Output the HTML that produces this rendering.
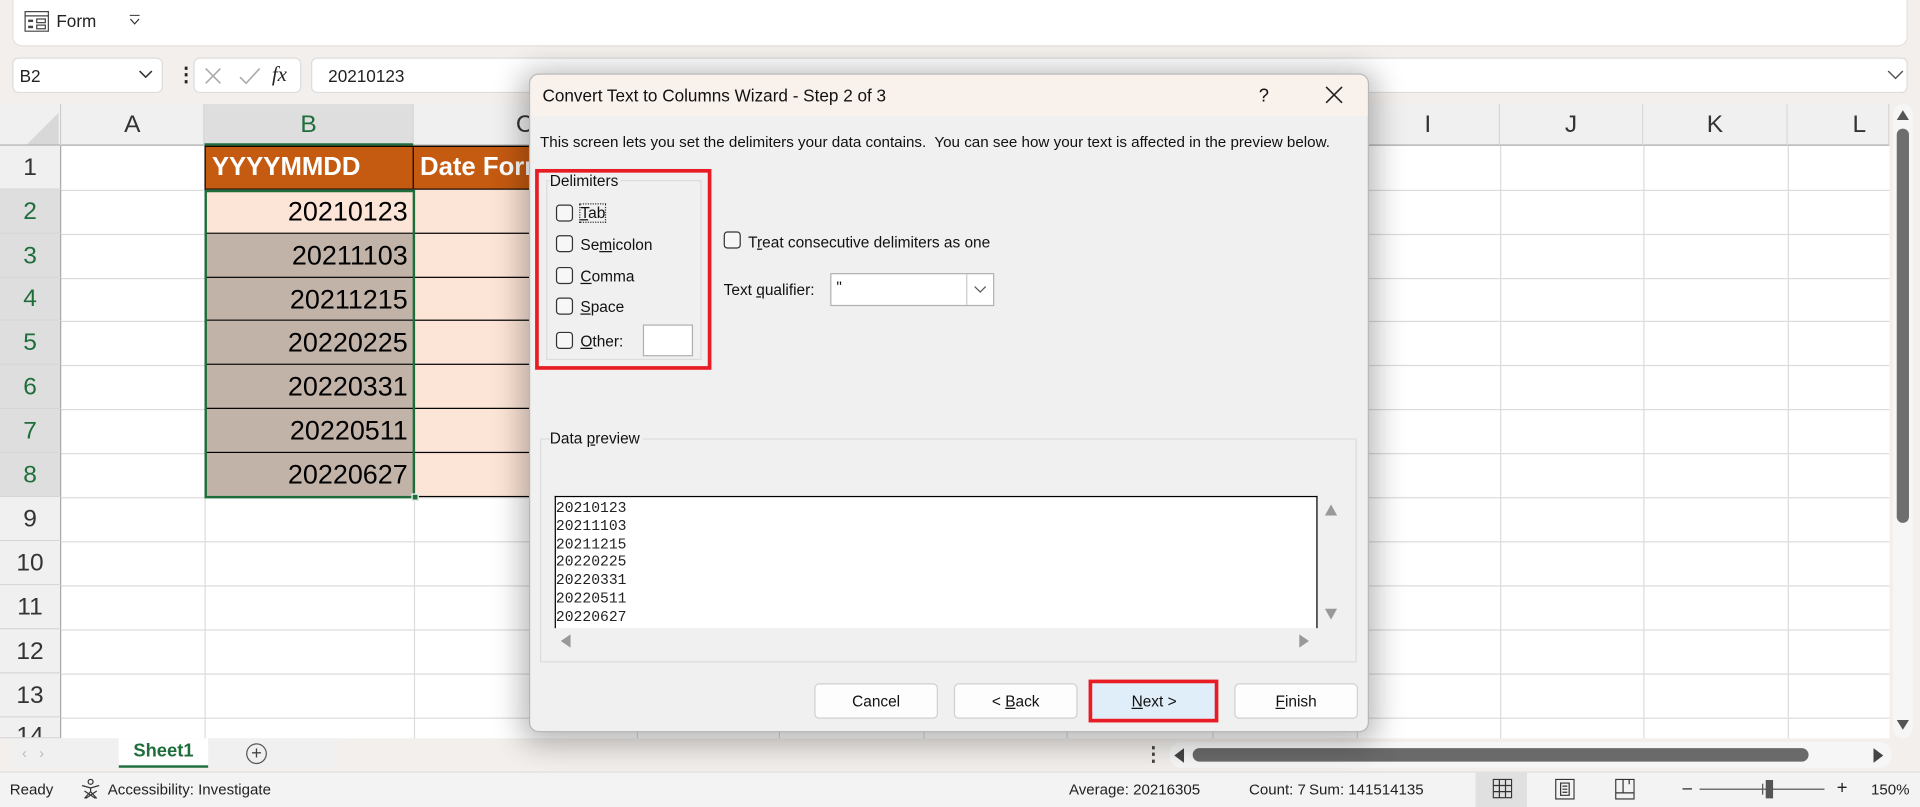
<!DOCTYPE html>
<html><head><meta charset="utf-8"><style>
*{box-sizing:border-box;margin:0;padding:0}
html,body{width:1920px;height:807px;overflow:hidden;background:#f3efec}
#w{position:absolute;left:0;top:0;width:1568px;height:659px;transform:scale(1.22449);transform-origin:0 0;font-family:"Liberation Sans",sans-serif;color:#222;background:#f3efec;overflow:hidden}
.a{position:absolute}
.ch{position:absolute;top:85px;height:34px;background:#f0f0f0;border-right:1px solid #d6d6d6;border-bottom:1px solid #aaa;font-size:20px;text-align:center;line-height:34px;color:#333}
.rh{position:absolute;left:0;width:50px;background:#f0f0f0;border-bottom:1px solid #d6d6d6;border-right:1px solid #aaa;font-size:20px;text-align:center;color:#333}
.vl{position:absolute;top:119px;width:1px;height:484px;background:#dcdcdc}
.hl{position:absolute;left:50px;width:1493px;height:1px;background:#dcdcdc}
.cell{position:absolute;font-size:22px;text-align:right;padding-right:5px;color:#000}
.cb{position:absolute;width:14px;height:14px;border:1px solid #333;border-radius:3px;background:#f7f7f7}
.dl{position:absolute;font-size:12.6px;color:#111;white-space:nowrap}
.btn{position:absolute;top:558px;height:29px;width:101px;background:#fdfdfd;border:1px solid #d0d0d0;border-radius:4px;font-size:12.6px;text-align:center;line-height:28px;color:#111}
.st{position:absolute;top:638px;font-size:12.3px;white-space:nowrap}
u{text-decoration:underline}
</style></head><body><div id="w">
<div class="a" style="left:10px;top:0;width:1548px;height:38px;background:#fff;border-radius:0 0 8px 8px;border:1px solid #e4e0dd;border-top:none"></div>
<svg class="a" style="left:20px;top:9px" width="20" height="17" viewBox="0 0 20 17"><rect x="0.5" y="0.5" width="19" height="16" fill="none" stroke="#444"/><line x1="0.5" y1="4" x2="19.5" y2="4" stroke="#444"/><rect x="3" y="7" width="4" height="2" fill="#444"/><rect x="10" y="6.5" width="7" height="3" fill="none" stroke="#444"/><rect x="3" y="12" width="4" height="2" fill="#444"/><rect x="10" y="11.5" width="7" height="3" fill="none" stroke="#444"/></svg>
<div class="a" style="left:46px;top:9px;font-size:14px">Form</div>
<svg class="a" style="left:105px;top:12px" width="10" height="9"><path d="M1 .5h8" stroke="#333"/><path d="M1.5 3.5l3.5 4 3.5-4" fill="none" stroke="#333"/></svg>
<div class="a" style="left:10px;top:47px;width:123px;height:29px;background:#fff;border:1px solid #ddd;border-radius:5px"></div>
<div class="a" style="left:16px;top:54px;font-size:14px">B2</div>
<svg class="a" style="left:113px;top:57px" width="12" height="8"><path d="M1 1l5 5 5-5" fill="none" stroke="#333" stroke-width="1.3"/></svg>
<div class="a" style="left:144px;top:51px;font-size:16px;font-weight:bold">&#8942;</div>
<div class="a" style="left:158px;top:47px;width:88px;height:29px;background:#fff;border:1px solid #ddd;border-radius:5px"></div>
<svg class="a" style="left:166px;top:54px" width="60" height="16"><path d="M2 2l12 12M14 2L2 14" stroke="#aaa" stroke-width="1.3"/><path d="M30 9l5 5 11-12" fill="none" stroke="#aaa" stroke-width="1.3"/></svg>
<div class="a" style="left:222px;top:51px;font-size:17px;font-style:italic;font-family:'Liberation Serif',serif">fx</div>
<div class="a" style="left:254px;top:47px;width:1304px;height:29px;background:#fff;border:1px solid #ddd;border-radius:5px"></div>
<div class="a" style="left:268px;top:54px;font-size:14px">20210123</div>
<svg class="a" style="left:1541px;top:57px" width="14" height="8"><path d="M1 1l6 6 6-6" fill="none" stroke="#555" stroke-width="1.2"/></svg>
<div class="a" style="left:0;top:119px;width:1543px;height:484px;background:#fff"></div>
<div class="a" style="left:0;top:85px;width:50px;height:34px;background:#f0f0f0;border-right:1px solid #ccc;border-bottom:1px solid #aaa"></div>
<svg class="a" style="left:22px;top:92px" width="26" height="26"><path d="M26 0V26H0Z" fill="#d8d8d8"/></svg>
<div class="ch" style="left:50px;width:117px">A</div>
<div class="ch" style="left:167px;width:171px;background:#dedede;color:#1e6e3c;border-bottom:2px solid #1e6e3c">B</div>
<div class="ch" style="left:338px;width:182px">C</div>
<div class="ch" style="left:1108px;width:117px">I</div>
<div class="ch" style="left:1225px;width:117px">J</div>
<div class="ch" style="left:1342px;width:118px">K</div>
<div class="ch" style="left:1460px;width:83px;text-align:right;padding-right:18px">L</div>
<div class="vl" style="left:167px"></div><div class="vl" style="left:338px"></div><div class="vl" style="left:520px"></div><div class="vl" style="left:636px"></div><div class="vl" style="left:754px"></div><div class="vl" style="left:871px"></div><div class="vl" style="left:990px"></div><div class="vl" style="left:1108px"></div><div class="vl" style="left:1225px"></div><div class="vl" style="left:1342px"></div><div class="vl" style="left:1460px"></div>
<div class="hl" style="top:155px"></div><div class="hl" style="top:191px"></div><div class="hl" style="top:227px"></div><div class="hl" style="top:262px"></div><div class="hl" style="top:298px"></div><div class="hl" style="top:334px"></div><div class="hl" style="top:370px"></div><div class="hl" style="top:406px"></div><div class="hl" style="top:442px"></div><div class="hl" style="top:478px"></div><div class="hl" style="top:514px"></div><div class="hl" style="top:550px"></div><div class="hl" style="top:586px"></div>
<div class="rh" style="top:119px;height:36px;line-height:36px">1</div>
<div class="rh" style="top:155px;height:36px;line-height:36px;background:#dedede;color:#1e6e3c">2</div>
<div class="rh" style="top:191px;height:36px;line-height:36px;background:#dedede;color:#1e6e3c">3</div>
<div class="rh" style="top:227px;height:35px;line-height:35px;background:#dedede;color:#1e6e3c">4</div>
<div class="rh" style="top:262px;height:36px;line-height:36px;background:#dedede;color:#1e6e3c">5</div>
<div class="rh" style="top:298px;height:36px;line-height:36px;background:#dedede;color:#1e6e3c">6</div>
<div class="rh" style="top:334px;height:36px;line-height:36px;background:#dedede;color:#1e6e3c">7</div>
<div class="rh" style="top:370px;height:36px;line-height:36px;background:#dedede;color:#1e6e3c">8</div>
<div class="rh" style="top:406px;height:36px;line-height:36px">9</div>
<div class="rh" style="top:442px;height:36px;line-height:36px">10</div>
<div class="rh" style="top:478px;height:36px;line-height:36px">11</div>
<div class="rh" style="top:514px;height:36px;line-height:36px">12</div>
<div class="rh" style="top:550px;height:36px;line-height:36px">13</div>
<div class="rh" style="top:586px;height:17px;line-height:30px;overflow:hidden">14</div>
<div class="a" style="left:167px;top:119px;width:171px;height:36px;background:#c55a11;border:1px solid #000;color:#fff;font-weight:bold;font-size:21px;line-height:34px;padding-left:5px">YYYYMMDD</div>
<div class="a" style="left:338px;top:119px;width:182px;height:36px;background:#c55a11;border:1px solid #000;border-left:none;color:#fff;font-weight:bold;font-size:21px;line-height:34px;padding-left:5px;white-space:nowrap;overflow:hidden">Date Format</div>
<div class="a" style="left:338px;top:155px;width:182px;height:251px;background:#fce4d6"></div>
<div class="cell" style="left:168px;top:155px;width:170px;height:36px;line-height:36px;background:#fce4d6;border-bottom:1px solid #000">20210123</div>
<div class="cell" style="left:168px;top:191px;width:170px;height:36px;line-height:36px;background:#c2b3a9;border-bottom:1px solid #000">20211103</div>
<div class="cell" style="left:168px;top:227px;width:170px;height:35px;line-height:35px;background:#c2b3a9;border-bottom:1px solid #000">20211215</div>
<div class="cell" style="left:168px;top:262px;width:170px;height:36px;line-height:36px;background:#c2b3a9;border-bottom:1px solid #000">20220225</div>
<div class="cell" style="left:168px;top:298px;width:170px;height:36px;line-height:36px;background:#c2b3a9;border-bottom:1px solid #000">20220331</div>
<div class="cell" style="left:168px;top:334px;width:170px;height:36px;line-height:36px;background:#c2b3a9;border-bottom:1px solid #000">20220511</div>
<div class="cell" style="left:168px;top:370px;width:170px;height:36px;line-height:36px;background:#c2b3a9">20220627</div>
<div class="a" style="left:338px;top:190px;width:182px;height:1px;background:#000"></div><div class="a" style="left:338px;top:226px;width:182px;height:1px;background:#000"></div><div class="a" style="left:338px;top:261px;width:182px;height:1px;background:#000"></div><div class="a" style="left:338px;top:297px;width:182px;height:1px;background:#000"></div><div class="a" style="left:338px;top:333px;width:182px;height:1px;background:#000"></div><div class="a" style="left:338px;top:369px;width:182px;height:1px;background:#000"></div><div class="a" style="left:338px;top:405px;width:182px;height:1px;background:#000"></div>
<div class="a" style="left:167px;top:155px;width:172px;height:252px;border:2px solid #1e6e3c"></div>
<div class="a" style="left:336px;top:403px;width:6px;height:6px;background:#1e6e3c;border:1px solid #fff"></div>
<div class="a" style="left:1546px;top:85px;width:16px;height:518px;background:#f6f6f6;border-radius:8px"></div>
<svg class="a" style="left:1549px;top:90px" width="10" height="8"><path d="M5 0L10 8H0Z" fill="#555"/></svg>
<div class="a" style="left:1549px;top:105px;width:10px;height:322px;background:#6e6e6e;border-radius:5px"></div>
<svg class="a" style="left:1549px;top:588px" width="10" height="8"><path d="M5 8L10 0H0Z" fill="#555"/></svg>
<div class="a" style="left:0;top:603px;width:1568px;height:27px;background:#f3efec"></div>
<div class="a" style="left:10px;top:603px;width:265px;height:25px;background:#f0f0f0"></div>
<div class="a" style="left:18px;top:608px;font-size:12px;color:#bbb">&#x2039;&nbsp;&nbsp;&nbsp;&#x203A;</div>
<div class="a" style="left:97px;top:603px;width:73px;height:24px;background:#fff;border-bottom:2px solid #1e6e3c;text-align:center;line-height:22px;font-weight:bold;font-size:15px;color:#1e6e3c">Sheet1</div>
<div class="a" style="left:201px;top:607px;width:17px;height:17px;border:1px solid #555;border-radius:50%;text-align:center;line-height:15px;font-size:15px;color:#444">+</div>
<div class="a" style="left:934px;top:606px;font-size:16px;font-weight:bold;color:#444">&#8942;</div>
<div class="a" style="left:955px;top:606px;width:590px;height:21px;background:#f6f6f6;border-radius:10px"></div>
<svg class="a" style="left:959px;top:611px" width="8" height="12"><path d="M0 6L8 0V12Z" fill="#444"/></svg>
<div class="a" style="left:974px;top:611px;width:503px;height:11px;background:#6a6a6a;border-radius:6px"></div>
<svg class="a" style="left:1530px;top:611px" width="8" height="12"><path d="M8 6L0 0V12Z" fill="#444"/></svg>
<div class="a" style="left:0;top:630px;width:1568px;height:29px;background:#f3f3f3;border-top:1px solid #e0e0e0"></div>
<div class="st" style="left:8px">Ready</div>
<svg class="a" style="left:66px;top:636px" width="16" height="17"><circle cx="8" cy="2.5" r="2" fill="none" stroke="#333"/><path d="M1 5.5l7 2 7-2M8 7.5v3M3 16l5-5.5 5 5.5M3 10l9 6M13 10l-9 6" fill="none" stroke="#333"/></svg>
<div class="st" style="left:88px">Accessibility: Investigate</div>
<div class="st" style="left:873px">Average: 20216305</div>
<div class="st" style="left:1020px">Count: 7</div>
<div class="st" style="left:1069px">Sum: 141514135</div>
<div class="a" style="left:1205px;top:631px;width:42px;height:28px;background:#e0e0e0"></div>
<svg class="a" style="left:1219px;top:636px" width="16" height="16"><path d="M.5.5h15v15H.5zM5.5.5v15M10.5.5v15M.5 5.5h15M.5 10.5h15" fill="none" stroke="#333"/></svg>
<svg class="a" style="left:1270px;top:636px" width="16" height="17"><path d="M.5.5h15v16H.5z" fill="none" stroke="#333"/><path d="M4.5 3.5h7v10h-7z M6 6h4M6 8.5h4M6 11h4" fill="none" stroke="#333"/></svg>
<svg class="a" style="left:1319px;top:636px" width="16" height="17"><path d="M.5.5h15v16H.5zM.5 11.5h15M6.5.5v11M11.5.5v4" fill="none" stroke="#333"/></svg>
<div class="a" style="left:1374px;top:635px;font-size:14px">&#8211;</div>
<div class="a" style="left:1388px;top:644px;width:102px;height:1px;background:#555"></div>
<div class="a" style="left:1439px;top:640px;width:1px;height:9px;background:#555"></div>
<div class="a" style="left:1442px;top:637px;width:6px;height:15px;background:#555"></div>
<div class="a" style="left:1500px;top:635px;font-size:15px">+</div>
<div class="st" style="left:1528px">150%</div>
<!-- dialog -->
<div class="a" style="left:432px;top:60px;width:686px;height:538px;background:#f0f0f0;border:1px solid #b8b8b8;border-radius:8px;overflow:hidden;box-shadow:0 4px 24px 6px rgba(0,0,0,.28)">
 <div class="a" style="left:0;top:0;width:686px;height:34px;background:#f9f1ec"></div>
</div>
<div class="dl" style="left:443px;top:70px;font-size:14px">Convert Text to Columns Wizard - Step 2 of 3</div>
<div class="dl" style="left:1028px;top:70px;font-size:15px">?</div>
<svg class="a" style="left:1082px;top:70px" width="15" height="15"><path d="M1 1l13 13M14 1L1 14" stroke="#222" stroke-width="1.3"/></svg>
<div class="dl" style="left:441px;top:109px;font-size:12.4px">This screen lets you set the delimiters your data contains.&nbsp; You can see how your text is affected in the preview below.</div>
<div class="a" style="left:446px;top:147px;width:127px;height:147px;border:1px solid #dcdcdc"></div>
<div class="dl" style="left:449px;top:141px;background:#f0f0f0;padding-right:2px">Delimiters</div>
<div class="cb" style="left:454px;top:167px"></div><div class="dl" style="left:474px;top:167px;outline:1px dotted #333"><u>T</u>ab</div>
<div class="cb" style="left:454px;top:192px"></div><div class="dl" style="left:474px;top:193px">Se<u>m</u>icolon</div>
<div class="cb" style="left:454px;top:218px"></div><div class="dl" style="left:474px;top:219px"><u>C</u>omma</div>
<div class="cb" style="left:454px;top:243px"></div><div class="dl" style="left:474px;top:244px"><u>S</u>pace</div>
<div class="cb" style="left:454px;top:271px"></div><div class="dl" style="left:474px;top:272px"><u>O</u>ther:</div>
<div class="a" style="left:525px;top:265px;width:41px;height:26px;background:#fff;border:1px solid #b0b0b0"></div>
<div class="a" style="left:437px;top:138px;width:144px;height:164px;border:3px solid #e81c24"></div>
<div class="cb" style="left:591px;top:189px"></div><div class="dl" style="left:611px;top:191px">T<u>r</u>eat consecutive delimiters as one</div>
<div class="dl" style="left:591px;top:230px">Text <u>q</u>ualifier:</div>
<div class="a" style="left:678px;top:223px;width:134px;height:27px;background:#fff;border:1px solid #b0b0b0"></div>
<div class="dl" style="left:683px;top:228px">"</div>
<div class="a" style="left:789px;top:224px;width:22px;height:25px;border-left:1px solid #ccc"></div>
<svg class="a" style="left:795px;top:233px" width="11" height="7"><path d="M1 1l4.5 4.5L10 1" fill="none" stroke="#555"/></svg>
<div class="a" style="left:441px;top:358px;width:667px;height:183px;border:1px solid #dcdcdc"></div>
<div class="dl" style="left:449px;top:351px;background:#f0f0f0;padding-right:2px">Data <u>p</u>review</div>
<div class="a" style="left:453px;top:405px;width:623px;height:108px;background:#fff;border:1px solid #000;border-bottom:none;font-family:'Liberation Mono',monospace;font-size:12px;line-height:14.8px;padding-top:2px;overflow:hidden;color:#222">20210123<br>20211103<br>20211215<br>20220225<br>20220331<br>20220511<br>20220627</div>
<svg class="a" style="left:1082px;top:412px" width="10" height="9"><path d="M5 0L10 9H0Z" fill="#999"/></svg>
<svg class="a" style="left:1082px;top:497px" width="10" height="9"><path d="M5 9L10 0H0Z" fill="#999"/></svg>
<svg class="a" style="left:458px;top:518px" width="8" height="11"><path d="M0 5.5L8 0V11Z" fill="#999"/></svg>
<svg class="a" style="left:1061px;top:518px" width="8" height="11"><path d="M8 5.5L0 0V11Z" fill="#999"/></svg>
<div class="btn" style="left:665px">Cancel</div>
<div class="btn" style="left:779px">&lt; <u>B</u>ack</div>
<div class="btn" style="left:892px;background:#e0eef9;border-color:#e0eef9"><u>N</u>ext &gt;</div>
<div class="a" style="left:889px;top:555px;width:106px;height:35px;border:3px solid #e81c24"></div>
<div class="btn" style="left:1008px"><u>F</u>inish</div>
</div></body></html>
